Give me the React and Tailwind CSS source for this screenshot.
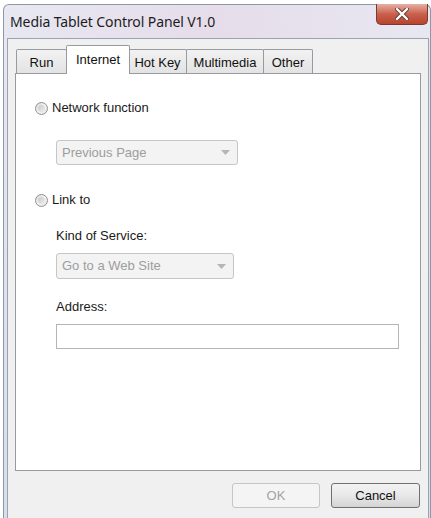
import React from "react";

const tabs = [
	{ label: "Run", w: "w-[51px]" },
	{ label: "Internet", w: "w-[64px]", active: true },
	{ label: "Hot Key", w: "w-[59px]" },
	{ label: "Multimedia", w: "w-[78px]" },
	{ label: "Other", w: "w-[50px]" },
];

const Radio = ({ label }) => (
	<div className="flex items-center h-[16px] ml-[19px]">
		<span className="w-[13px] h-[13px] rounded-full border border-[#8f9090] bg-gradient-to-br from-[#d8d8d8] via-[#f4f4f4] to-[#e2e2e2] flex items-center justify-center">
			<span className="w-[7px] h-[7px] rounded-full bg-gradient-to-br from-[#c8c8c8] to-[#eeeeee]"></span>
		</span>
		<span className="ml-[4px] text-[13px] text-[#1a1a1a]">{label}</span>
	</div>
);

const Combo = ({ value, w }) => (
	<div
		className={`${w} ml-[40px] flex items-center justify-between rounded-[3px] border border-[#c6c6c6] bg-[#f3f3f3] pl-[5px] pr-[7px]`}
	>
		<span className="text-[13px] text-[#9d9d9d]">{value}</span>
		<svg width="9" height="5" viewBox="0 0 9 5">
			<path d="M0 0 H9 L4.5 5 Z" fill="#b5b5b5" />
		</svg>
	</div>
);

export default function App() {
	return (
		<div
			className="w-[431px] h-[518px] bg-white overflow-hidden"
			style={{ fontFamily: '"Liberation Sans", Arial, sans-serif' }}
		>
			<div className="relative ml-[3px] mt-[4px] w-[428px] h-[514px] rounded-t-[6px] border-l border-t border-r border-[#8e97a5] bg-gradient-to-b from-[#e8e8f2] via-[#e0e2ee] to-[#d6dfec] flex flex-col">
				{/* title bar */}
				<div className="h-[33px] flex items-center pl-[6px] bg-gradient-to-r from-transparent via-[#e6dcea] to-transparent">
					<span
						className="text-[14px] text-[#1c1c1c] tracking-[-0.1px]"
						style={{ fontFamily: '"Noto Sans", "Open Sans", sans-serif' }}
					>
						Media Tablet Control Panel V1.0
					</span>
				</div>
				<div className="absolute right-[2px] top-[-1px] w-[52px] h-[21px] rounded-b-[5px] border border-t-0 border-[#7a3a30] bg-gradient-to-b from-[#e6b0a4] via-[#c9604c] to-[#b8442e] flex items-center justify-center">
					<svg width="14" height="12" viewBox="0 0 14 12">
						<path
							d="M2 1 L12 11 M12 1 L2 11"
							stroke="#6a3a32"
							strokeWidth="4.2"
							strokeLinecap="round"
						/>
						<path
							d="M2 1 L12 11 M12 1 L2 11"
							stroke="#ffffff"
							strokeWidth="2.4"
							strokeLinecap="round"
						/>
					</svg>
				</div>

				{/* client area */}
				<div className="ml-[3px] mr-[1px] flex-1 border-l border-t border-r border-[#9aa3b0] bg-[#f0f0f0] px-[7px] flex flex-col">
					<div className="flex items-end h-[34px] ml-[1px]">
						{tabs.map((t, i) =>
							t.active ? (
								<div
									key={t.label}
									className={`${t.w} -mx-[1px] h-[29px] -mb-px relative z-10 border border-b-0 border-[#979aa0] bg-white flex items-center justify-center text-[13px] text-[#111] rounded-t-[2px]`}
								>
									{t.label}
								</div>
							) : (
								<div
									key={t.label}
									className={`${t.w} ${i > 0 ? "-ml-px" : ""} h-[24px] border border-b-0 border-[#979aa0] bg-gradient-to-b from-[#f2f2f2] to-[#e3e3e3] flex items-center justify-center text-[13px] text-[#111] pt-[2px] rounded-t-[2px]`}
								>
									{t.label}
								</div>
							)
						)}
					</div>

					{/* tab page */}
					<div className="h-[398px] border border-[#979aa0] bg-white flex flex-col">
						<div className="mt-[26px]">
							<Radio label="Network function" />
						</div>
						<div className="mt-[24px] h-[25px] flex">
							<Combo value="Previous Page" w="w-[182px]" />
						</div>
						<div className="mt-[27px]">
							<Radio label="Link to" />
						</div>
						<div className="mt-[20px] ml-[40px] h-[16px] flex items-center text-[13px] text-[#1a1a1a]">
							Kind of Service:
						</div>
						<div className="mt-[9px] h-[26px] flex">
							<Combo value="Go to a Web Site" w="w-[178px]" />
						</div>
						<div className="mt-[20px] ml-[40px] h-[16px] flex items-center text-[13px] text-[#1a1a1a]">
							Address:
						</div>
						<div className="mt-[9px] ml-[40px] w-[343px] h-[25px] border border-[#b3b5ba] bg-white"></div>
					</div>

					{/* buttons */}
					<div className="mt-[12px] flex justify-end gap-[11px] pr-[1px]">
						<button className="w-[88px] h-[25px] rounded-[3px] border border-[#c3c5c8] bg-[#f4f4f4] text-[13px] text-[#a3a3a3]">
							OK
						</button>
						<button className="w-[89px] h-[25px] rounded-[3px] border border-[#707070] bg-gradient-to-b from-[#f3f3f3] via-[#e8e8e8] to-[#d4d4d4] text-[13px] text-[#111]">
							Cancel
						</button>
					</div>
				</div>
			</div>
		</div>
	);
}
